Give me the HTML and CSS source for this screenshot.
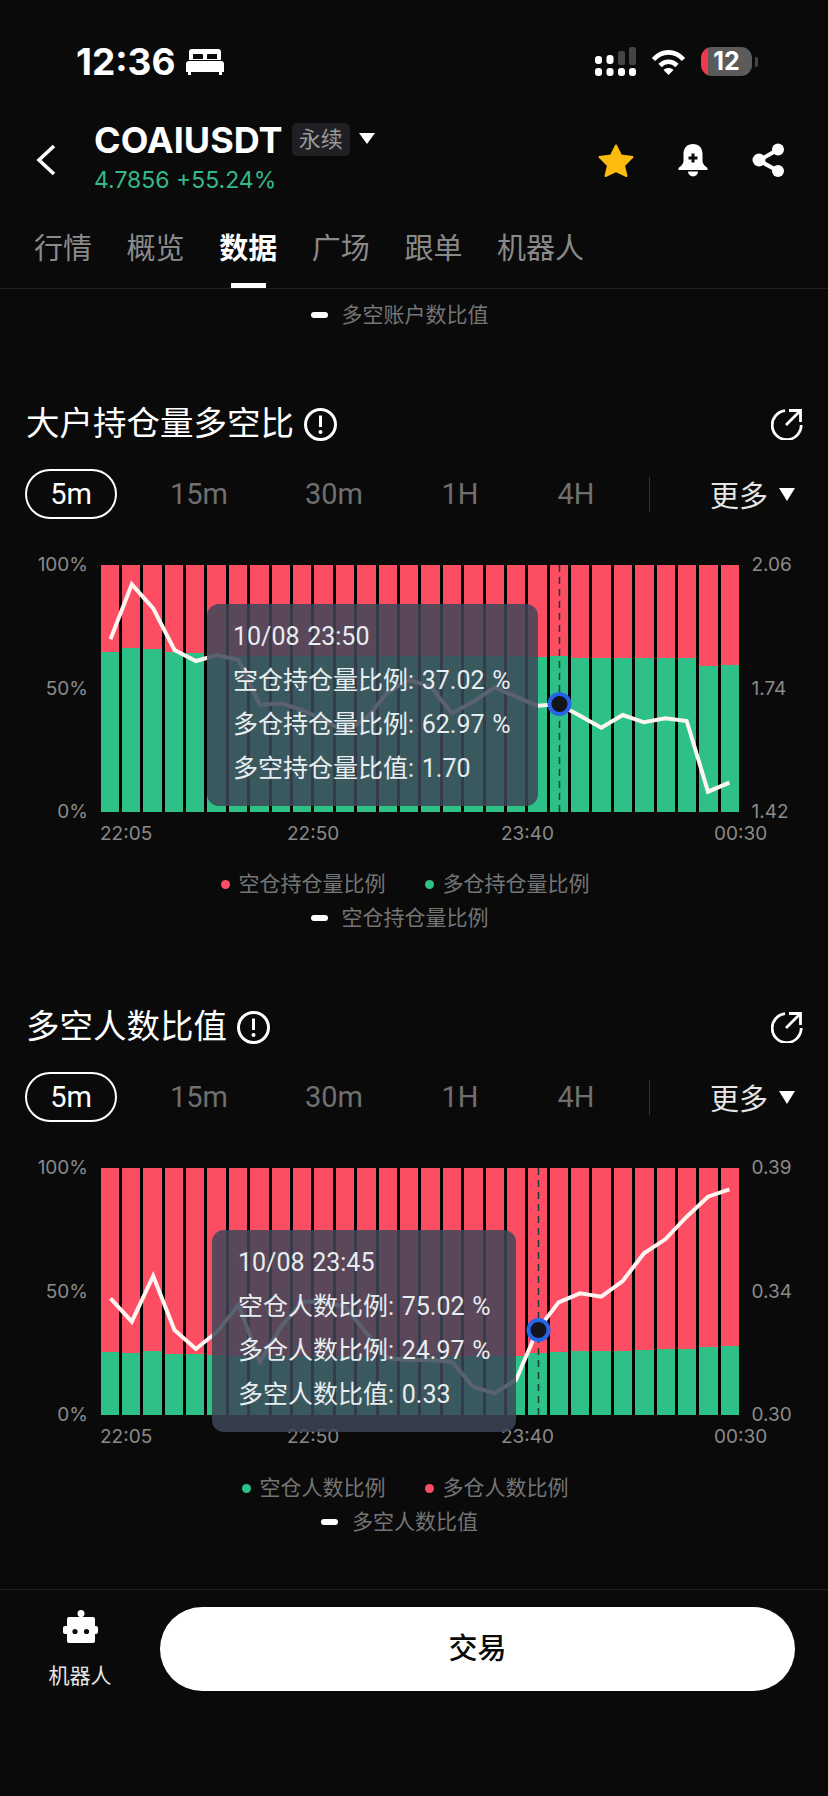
FILE: index.html
```html
<!DOCTYPE html>
<html lang="zh-CN">
<head>
<meta charset="utf-8">
<title>COAIUSDT</title>
<link rel="stylesheet" href="styles.css">
</head>
<body>
  <div class="status">
    <div class="status-left">
      <span class="clock">12:36</span>
      <svg class="bed" width="38" height="26" viewBox="0 0 38 26">
        <path fill="#fff" fill-rule="evenodd" d="M6 0H32A3 3 0 0 1 35 3V11H3V3A3 3 0 0 1 6 0ZM7 5V10H17V6A1 1 0 0 0 16 5ZM22 5A1 1 0 0 0 21 6V10H31V5Z"/>
        <path fill="#fff" d="M3 12H35A3 3 0 0 1 38 15V23H36V26H33V23H5V26H2V23H0V15A3 3 0 0 1 3 12Z"/>
      </svg>
    </div>
    <div class="status-right">
      <svg width="41" height="29" viewBox="0 0 41 29">
        <g fill="#fff">
          <rect x="0" y="9" width="7" height="8" rx="3"/>
          <rect x="11.5" y="8" width="7" height="9" rx="3"/>
          <rect x="0" y="21" width="7" height="8" rx="3"/>
          <rect x="11.5" y="21" width="7" height="8" rx="3"/>
          <rect x="23" y="21" width="7" height="8" rx="3"/>
          <rect x="34" y="21" width="7" height="8" rx="3"/>
        </g>
        <rect x="23" y="4" width="7" height="14" rx="2" fill="#444"/>
        <rect x="34" y="0" width="7" height="18" rx="2" fill="#444"/>
      </svg>
      <svg width="35" height="26" viewBox="0 0 35 26">
        <path d="M2.5 10.5C11 1 24 1 32.5 10.5M9 16.5C14 11.5 21 11.5 26 16.5" fill="none" stroke="#fff" stroke-width="4.6"/>
        <path d="M12.5 21C15.5 18.4 19.5 18.4 22.5 21L17.5 26Z" fill="#fff"/>
      </svg>
      <div class="battery">12</div>
    </div>
  </div>

  <div class="top">
    <svg class="back" width="20" height="32" viewBox="0 0 20 32">
      <polyline points="18,2 3,16 18,30" fill="none" stroke="#fff" stroke-width="3.6"/>
    </svg>
    <div class="pair">
      <div class="pair-name">
        <span class="symbol">COAIUSDT</span>
        <span class="tag">永续</span>
        <span class="tri-small"></span>
      </div>
      <div class="price">4.7856 +55.24%</div>
    </div>
    <div class="actions">
      <svg width="36" height="33" viewBox="0 0 36 33">
        <polygon points="18,1.5 23,11.5 34.5,13 26,21.5 28.5,32 18,27 7.5,32 10,21.5 1.5,13 13,11.5" fill="#fdbc0d" stroke="#fdbc0d" stroke-width="2" stroke-linejoin="round"/>
      </svg>
      <svg width="30" height="33" viewBox="0 0 30 33">
        <path fill="#fff" d="M15 0C9 0 5.5 4 5.5 10V17C5.5 20 3 22 0.5 24V26H29.5V24C27 22 24.5 20 24.5 17V10C24.5 4 21 0 15 0Z"/>
        <path fill="#fff" d="M10 27.5H20A5 5 0 0 1 10 27.5Z"/>
        <path d="M15 9.5V18.5M10.5 14H19.5" stroke="#0a0a0a" stroke-width="3"/>
      </svg>
      <svg width="33" height="34" viewBox="0 0 33 34">
        <path d="M26 6.5L7 17.5L26 28" fill="none" stroke="#fff" stroke-width="4"/>
        <circle cx="26" cy="6.5" r="6" fill="#fff"/>
        <circle cx="7" cy="17" r="6.5" fill="#fff"/>
        <circle cx="26" cy="28" r="6" fill="#fff"/>
      </svg>
    </div>
  </div>

  <div class="tabs">
    <span class="tab">行情</span>
    <span class="tab">概览</span>
    <span class="tab active">数据</span>
    <span class="tab">广场</span>
    <span class="tab">跟单</span>
    <span class="tab">机器人</span>
  </div>

  <div class="legend-row first-legend"><span class="dash"></span>多空账户数比值</div>

  <!-- 大户持仓量多空比 -->
  <div class="section">
    <div class="section-head">
      <h2>大户持仓量多空比</h2>
      <svg class="info" width="33" height="33" viewBox="0 0 33 33">
        <circle cx="16.5" cy="16.5" r="15" fill="none" stroke="#fff" stroke-width="3"/>
        <path d="M16.5 7.5V19" stroke="#fff" stroke-width="3"/>
        <circle cx="16.5" cy="24" r="2" fill="#fff"/>
      </svg>
      <svg class="open" width="32" height="32" viewBox="0 0 32 32">
        <path d="M14 2.7A14.5 14.5 0 1 0 30.2 17" fill="none" stroke="#fff" stroke-width="2.8"/>
        <path d="M15 17L29.5 2.5M18 2.5H29.5V14" fill="none" stroke="#fff" stroke-width="2.8"/>
      </svg>
    </div>
    <div class="periods">
      <span class="period selected">5m</span>
      <span class="period">15m</span>
      <span class="period">30m</span>
      <span class="period">1H</span>
      <span class="period">4H</span>
      <span class="period-sep"></span>
      <span class="more">更多<span class="tri-more"></span></span>
    </div>
    <div class="chart">
      <div class="axis axis-left"><span>100%</span><span>50%</span><span>0%</span></div>
      <div class="plot">
        <div class="bars">
          <div class="bar"><i style="height:64.9%"></i></div>
          <div class="bar"><i style="height:66.5%"></i></div>
          <div class="bar"><i style="height:65.8%"></i></div>
          <div class="bar"><i style="height:64.9%"></i></div>
          <div class="bar"><i style="height:64.2%"></i></div>
          <div class="bar"><i style="height:63.6%"></i></div>
          <div class="bar"><i style="height:63.2%"></i></div>
          <div class="bar"><i style="height:63%"></i></div>
          <div class="bar"><i style="height:63%"></i></div>
          <div class="bar"><i style="height:63%"></i></div>
          <div class="bar"><i style="height:63%"></i></div>
          <div class="bar"><i style="height:63%"></i></div>
          <div class="bar"><i style="height:63%"></i></div>
          <div class="bar"><i style="height:63%"></i></div>
          <div class="bar"><i style="height:63%"></i></div>
          <div class="bar"><i style="height:63%"></i></div>
          <div class="bar"><i style="height:63%"></i></div>
          <div class="bar"><i style="height:63%"></i></div>
          <div class="bar"><i style="height:63%"></i></div>
          <div class="bar"><i style="height:63%"></i></div>
          <div class="bar"><i style="height:62.8%"></i></div>
          <div class="bar"><i style="height:62.97%"></i></div>
          <div class="bar"><i style="height:62.2%"></i></div>
          <div class="bar"><i style="height:62.2%"></i></div>
          <div class="bar"><i style="height:62.4%"></i></div>
          <div class="bar"><i style="height:62.4%"></i></div>
          <div class="bar"><i style="height:62.4%"></i></div>
          <div class="bar"><i style="height:62.2%"></i></div>
          <div class="bar"><i style="height:59.2%"></i></div>
          <div class="bar"><i style="height:59.7%"></i></div>
        </div>
        <svg class="overlay" width="638.5" height="247" viewBox="0 0 638.5 247">
          <line x1="458.5" y1="0" x2="458.5" y2="247" class="cursor"/>
          <polyline class="line" points="9.5,74.3 30.8,19.3 52.2,43.3 73.5,85 94.9,96 116.2,90 137.5,95 158.9,140 180.2,138.3 201.6,145 222.9,155 244.2,166.7 265.6,153.3 286.9,126.7 308.3,115 329.6,121.7 350.9,148.3 372.3,136.7 393.6,122.3 415,131.7 436.3,140.7 457.6,139.3 479,150.7 500.3,162.7 521.7,150 543,157.3 564.3,153.3 585.7,156 607,226.7 628.4,217.7"/>
          <circle class="marker" cx="458.5" cy="139" r="10"/>
        </svg>
        <div class="tooltip tooltip-a">
          <div>10/08 23:50</div>
          <div>空仓持仓量比例: 37.02 %</div>
          <div>多仓持仓量比例: 62.97 %</div>
          <div>多空持仓量比值: 1.70</div>
        </div>
      </div>
      <div class="axis axis-right"><span>2.06</span><span>1.74</span><span>1.42</span></div>
    </div>
    <div class="xaxis"><span>22:05</span><span>22:50</span><span>23:40</span><span>00:30</span></div>
    <div class="legend-row legend-top">
      <span class="dot red"></span><span class="legend-text">空仓持仓量比例</span>
      <span class="dot green"></span><span>多仓持仓量比例</span>
    </div>
    <div class="legend-row legend-bottom"><span class="dash"></span>空仓持仓量比例</div>
  </div>

  <!-- 多空人数比值 -->
  <div class="section">
    <div class="section-head">
      <h2>多空人数比值</h2>
      <svg class="info" width="33" height="33" viewBox="0 0 33 33">
        <circle cx="16.5" cy="16.5" r="15" fill="none" stroke="#fff" stroke-width="3"/>
        <path d="M16.5 7.5V19" stroke="#fff" stroke-width="3"/>
        <circle cx="16.5" cy="24" r="2" fill="#fff"/>
      </svg>
      <svg class="open" width="32" height="32" viewBox="0 0 32 32">
        <path d="M14 2.7A14.5 14.5 0 1 0 30.2 17" fill="none" stroke="#fff" stroke-width="2.8"/>
        <path d="M15 17L29.5 2.5M18 2.5H29.5V14" fill="none" stroke="#fff" stroke-width="2.8"/>
      </svg>
    </div>
    <div class="periods">
      <span class="period selected">5m</span>
      <span class="period">15m</span>
      <span class="period">30m</span>
      <span class="period">1H</span>
      <span class="period">4H</span>
      <span class="period-sep"></span>
      <span class="more">更多<span class="tri-more"></span></span>
    </div>
    <div class="chart">
      <div class="axis axis-left"><span>100%</span><span>50%</span><span>0%</span></div>
      <div class="plot">
        <div class="bars">
          <div class="bar"><i style="height:25.6%"></i></div>
          <div class="bar"><i style="height:25.1%"></i></div>
          <div class="bar"><i style="height:26%"></i></div>
          <div class="bar"><i style="height:24.7%"></i></div>
          <div class="bar"><i style="height:24.7%"></i></div>
          <div class="bar"><i style="height:24.4%"></i></div>
          <div class="bar"><i style="height:24%"></i></div>
          <div class="bar"><i style="height:24%"></i></div>
          <div class="bar"><i style="height:24%"></i></div>
          <div class="bar"><i style="height:24%"></i></div>
          <div class="bar"><i style="height:24%"></i></div>
          <div class="bar"><i style="height:24%"></i></div>
          <div class="bar"><i style="height:24%"></i></div>
          <div class="bar"><i style="height:24%"></i></div>
          <div class="bar"><i style="height:24%"></i></div>
          <div class="bar"><i style="height:24%"></i></div>
          <div class="bar"><i style="height:24%"></i></div>
          <div class="bar"><i style="height:24%"></i></div>
          <div class="bar"><i style="height:24%"></i></div>
          <div class="bar"><i style="height:23.7%"></i></div>
          <div class="bar"><i style="height:24.97%"></i></div>
          <div class="bar"><i style="height:25.4%"></i></div>
          <div class="bar"><i style="height:25.8%"></i></div>
          <div class="bar"><i style="height:25.8%"></i></div>
          <div class="bar"><i style="height:26%"></i></div>
          <div class="bar"><i style="height:26.3%"></i></div>
          <div class="bar"><i style="height:26.6%"></i></div>
          <div class="bar"><i style="height:26.7%"></i></div>
          <div class="bar"><i style="height:27.7%"></i></div>
          <div class="bar"><i style="height:28%"></i></div>
        </div>
        <svg class="overlay" width="638.5" height="247" viewBox="0 0 638.5 247">
          <line x1="437.5" y1="0" x2="437.5" y2="247" class="cursor"/>
          <polyline class="line" points="9.5,130.3 30.8,153.7 52.2,108 73.5,162 94.9,181 116.2,163.7 137.5,137 158.9,193.7 180.2,158.7 201.6,133.7 222.9,133.7 244.2,138.7 265.6,165.3 286.9,190.3 308.3,192 329.6,192 350.9,193.7 372.3,218.7 393.6,225.3 415,212 436.3,162.3 457.6,134.3 479,125.3 500.3,128.7 521.7,113 543,85.3 564.3,71.3 585.7,48.7 607,28.7 628.4,21.3"/>
          <circle class="marker" cx="437.5" cy="162" r="10"/>
        </svg>
        <div class="tooltip tooltip-b">
          <div>10/08 23:45</div>
          <div>空仓人数比例: 75.02 %</div>
          <div>多仓人数比例: 24.97 %</div>
          <div>多空人数比值: 0.33</div>
        </div>
      </div>
      <div class="axis axis-right"><span>0.39</span><span>0.34</span><span>0.30</span></div>
    </div>
    <div class="xaxis"><span>22:05</span><span>22:50</span><span>23:40</span><span>00:30</span></div>
    <div class="legend-row legend-top">
      <span class="dot green"></span><span class="legend-text">空仓人数比例</span>
      <span class="dot red"></span><span>多仓人数比例</span>
    </div>
    <div class="legend-row legend-bottom"><span class="dash"></span>多空人数比值</div>
  </div>

  <div class="bottom">
    <div class="robot">
      <svg width="36" height="33" viewBox="0 0 36 33">
        <g fill="#fff">
          <rect x="5" y="7" width="28" height="26" rx="2"/>
          <rect x="1" y="16" width="35" height="8" rx="2"/>
          <circle cx="19" cy="3.5" r="3.5"/>
          <rect x="17.5" y="3" width="3" height="5"/>
        </g>
        <circle cx="13" cy="21.5" r="2.6" fill="#0a0a0a"/>
        <circle cx="24.5" cy="21.5" r="2.6" fill="#0a0a0a"/>
      </svg>
      <span>机器人</span>
    </div>
    <div class="trade">交易</div>
  </div>
</body>
</html>
```

FILE: styles.css
```css
* {
box-sizing: border-box;
}

body {
margin: 0;
width: 828px;
height: 1796px;
overflow: hidden;
background-color: #0a0a0a;
color: #fff;
font-family: Roboto, "Noto Sans CJK SC", sans-serif;
}

svg {
display: block;
flex-shrink: 0;
}

/* status bar */
.status {
height: 76px;
padding: 47px 76px 0 76px;
display: flex;
justify-content: space-between;
align-items: center;
}

.status-left {
display: flex;
align-items: center;
gap: 10px;
}

.clock {
font-family: Inter, sans-serif;
font-size: 37px;
font-weight: 700;
line-height: 29px;
}

.status-right {
display: flex;
align-items: center;
gap: 15px;
}

.battery {
width: 51px;
height: 29px;
border-radius: 11px;
background: linear-gradient(to right, #ee3a4c 7px, #5b5b5b 7px);
font-family: Inter, sans-serif;
font-size: 25px;
font-weight: 700;
line-height: 29px;
text-align: center;
position: relative;
}

.battery::after {
content: "";
position: absolute;
right: -6px;
top: 10px;
width: 3px;
height: 10px;
border-radius: 0 2px 2px 0;
background-color: #444;
}

/* pair header */
.top {
margin-top: 47px;
padding: 0 43px 0 36px;
display: flex;
align-items: flex-end;
}

.back {
margin-bottom: 16px;
}

.pair {
margin-left: 38px;
}

.pair-name {
display: flex;
align-items: center;
height: 33px;
}

.symbol {
font-family: Inter, sans-serif;
font-size: 36px;
font-weight: 700;
}

.tag {
margin-left: 9px;
width: 58px;
height: 33px;
border-radius: 5px;
background-color: #1f1f24;
color: #9a9a9a;
font-size: 22px;
line-height: 33px;
text-align: center;
}

.tri-small {
margin: 0 0 2px 9px;
border-left: 8px solid transparent;
border-right: 8px solid transparent;
border-top: 11px solid #fff;
}

.price {
margin-top: 12px;
font-family: Inter, sans-serif;
font-size: 23px;
line-height: 24px;
color: #35b988;
}

.actions {
margin-left: auto;
margin-bottom: 15px;
display: flex;
align-items: center;
gap: 44px;
}

/* tabs */
.tabs {
height: 97px;
padding: 37px 0 0 34px;
display: flex;
gap: 34.6px;
border-bottom: 1px solid #222;
}

.tab {
position: relative;
height: 40px;
font-size: 29px;
line-height: 40px;
color: #8a8a8a;
}

.tab.active {
color: #fff;
font-weight: 700;
}

.tab.active::after {
content: "";
position: absolute;
left: 12px;
bottom: -19px;
width: 35px;
height: 5px;
background-color: #fff;
}

/* legends */
.legend-row {
display: flex;
justify-content: center;
align-items: center;
font-size: 21px;
line-height: 28px;
color: #757575;
}

.first-legend {
margin-top: 12px;
padding-right: 29px;
}

.legend-top {
margin-top: 24px;
padding-right: 18px;
}

.section + .section .legend-top {
margin-top: 25px;
}

.legend-bottom {
margin-top: 6px;
padding-right: 29px;
}

.dash {
width: 17px;
height: 6px;
margin-right: 14px;
border-radius: 3px;
background-color: #fff;
}

.dot {
width: 9px;
height: 9px;
margin-right: 9px;
border-radius: 50%;
}

.dot.red {
background-color: #fd4d63;
}

.dot.green {
background-color: #2dc187;
}

.legend-text {
margin-right: 39px;
}

/* chart sections */
.section {
margin-top: 77px;
}

.section-head {
height: 36px;
padding: 0 25px 0 26px;
display: flex;
align-items: center;
}

.section-head h2 {
margin: 0;
font-size: 33.5px;
font-weight: 400;
line-height: 36px;
}

.info {
margin-left: 10px;
}

.open {
margin-left: auto;
}

.periods {
margin: 27px 0 0 25px;
height: 50px;
display: grid;
grid-template-columns: 92px 164px 106px 146px 86px 30px 2px 59px auto;
align-items: center;
}

.period {
font-size: 29px;
line-height: 50px;
text-align: center;
color: #6f6f6f;
}

.period.selected {
height: 50px;
border: 2px solid #fff;
border-radius: 25px;
line-height: 46px;
color: #fff;
}

.period-sep {
grid-column: 7;
width: 1px;
height: 35px;
background-color: #333;
}

.more {
grid-column: 9;
display: flex;
align-items: center;
font-size: 29px;
color: #e6e6e6;
}

.tri-more {
margin-left: 11px;
border-left: 8px solid transparent;
border-right: 8px solid transparent;
border-top: 13px solid #fff;
}

.chart {
margin-top: 46px;
display: grid;
grid-template-columns: 88px 638.5px auto;
column-gap: 12.5px;
align-items: start;
}

.axis {
height: 271px;
margin: -12px 0;
display: flex;
flex-direction: column;
justify-content: space-between;
font-family: Inter, sans-serif;
font-size: 19px;
line-height: 24px;
color: #8a8a8a;
}

.axis-left {
text-align: right;
}

.plot {
position: relative;
height: 247px;
}

.bars {
height: 100%;
display: flex;
gap: 3px;
background-color: #000;
}

.bar {
flex: 1;
display: flex;
align-items: flex-end;
background-color: #fd4d63;
}

.bar i {
display: block;
width: 100%;
background-color: #2dc187;
}

.overlay {
position: absolute;
left: 0;
top: 0;
overflow: visible;
}

.line {
fill: none;
stroke: #fff6f2;
stroke-width: 4;
}

.cursor {
stroke: #1c3a38;
stroke-width: 1.5;
stroke-dasharray: 7 5;
}

.marker {
fill: #14141c;
stroke: #2566e8;
stroke-width: 4;
}

.tooltip {
position: absolute;
height: 202px;
padding: 11px 0 0 26px;
border-radius: 12px;
background-color: rgba(61, 71, 88, 0.85);
color: #e8edf0;
font-size: 25px;
line-height: 44px;
word-spacing: 1.5px;
white-space: nowrap;
}

.tooltip-a {
left: 106.5px;
top: 39px;
width: 331px;
}

.tooltip-b {
left: 111.5px;
top: 62px;
width: 304px;
}

.xaxis {
margin: 10px 0 0 100px;
display: grid;
grid-template-columns: 187px 214px 213px auto;
font-family: Inter, sans-serif;
font-size: 19px;
line-height: 24px;
color: #8a8a8a;
}

/* bottom bar */
.bottom {
position: absolute;
left: 0;
top: 1589px;
width: 828px;
padding: 17px 33px 0 0;
display: flex;
border-top: 1px solid #222;
}

.robot {
width: 160px;
padding-top: 3px;
display: flex;
flex-direction: column;
align-items: center;
font-size: 21px;
line-height: 28px;
color: #e6e6e6;
}

.robot span {
margin-top: 19px;
}

.trade {
flex: 1;
height: 84px;
border-radius: 42px;
background-color: #fff;
color: #0a0a0a;
font-size: 29px;
font-weight: 500;
line-height: 84px;
text-align: center;
}
```
